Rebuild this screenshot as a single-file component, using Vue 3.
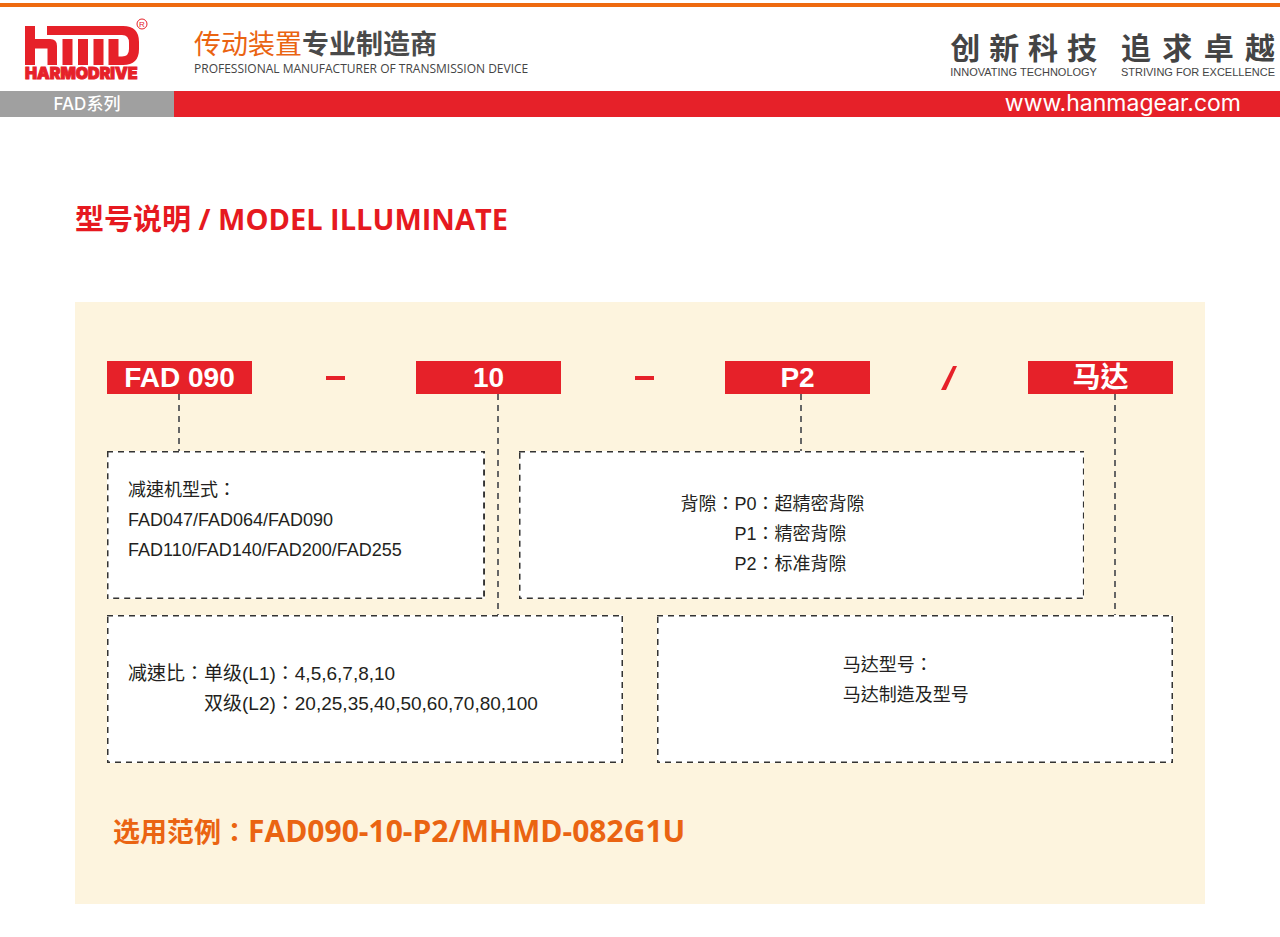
<template>
  <div class="page">
    <header class="header">
      <div class="brand">
        <svg class="logo" viewBox="0 0 124 64" role="img" aria-label="HARMODRIVE">
          <g fill="#e62129">
            <path d="M1 8H11V21H26Q33 21 33 28V47H23.5V30.5H11V47H1Z" />
            <path d="M38.5 21H48.5V47H38.5ZM54 21H64V47H54ZM69.5 21H79.5V47H69.5Z" />
            <path d="M23 8H99Q115 8 115 24V31Q115 47 99 47H84.5V21H94.5V38.5H98Q105 38.5 105 31V25Q105 17 98 17H23Z" />
          </g>
          <text class="logo-word" x="1" y="61">HARMODRIVE</text>
          <circle cx="118" cy="6" r="5" fill="none" stroke="#e62129" />
          <text class="logo-mark" x="118" y="9">R</text>
        </svg>
        <div class="tagline">
          <p class="tagline-cn"><span>传动装置</span><strong>专业制造商</strong></p>
          <p class="tagline-en">PROFESSIONAL MANUFACTURER OF TRANSMISSION DEVICE</p>
        </div>
      </div>
      <div class="slogans">
        <div v-for="slogan in slogans" :key="slogan.en" class="slogan">
          <p class="slogan-cn"><span v-for="letra in slogan.cn" :key="letra">{{ letra }}</span></p>
          <p class="slogan-en">{{ slogan.en }}</p>
        </div>
      </div>
    </header>

    <div class="bar">
      <span class="bar-series">FAD系列</span>
      <a class="bar-link" href="http://www.hanmagear.com">www.hanmagear.com</a>
    </div>

    <main class="content">
      <h1 class="title">型号说明 / MODEL ILLUMINATE</h1>

      <section class="panel">
        <div class="codes">
          <div class="code code-model">FAD 090</div>
          <i class="dash"></i>
          <div class="code code-ratio">10</div>
          <i class="dash"></i>
          <div class="code code-backlash">P2</div>
          <svg class="slash" viewBox="0 0 16 24"><path d="M12 0H16L5 24H0Z" /></svg>
          <div class="code code-motor">马达</div>
        </div>

        <div class="row row-top">
          <div class="box box-model">
            <svg class="edge"><rect width="100%" height="100%" /></svg>
            <p>减速机型式：</p>
            <p>FAD047/FAD064/FAD090</p>
            <p>FAD110/FAD140/FAD200/FAD255</p>
          </div>
          <div class="box box-backlash">
            <svg class="edge"><rect width="100%" height="100%" /></svg>
            <dl class="pairs">
              <dt>背隙：</dt>
              <dd v-for="item in backlash" :key="item">{{ item }}</dd>
            </dl>
          </div>
        </div>

        <div class="row row-bottom">
          <div class="box box-ratio">
            <svg class="edge"><rect width="100%" height="100%" /></svg>
            <dl class="pairs">
              <dt>减速比：</dt>
              <dd v-for="item in ratios" :key="item">{{ item }}</dd>
            </dl>
          </div>
          <div class="box box-motor">
            <svg class="edge"><rect width="100%" height="100%" /></svg>
            <p>马达型号：</p>
            <p>马达制造及型号</p>
          </div>
        </div>

        <p class="sample">选用范例：<span>FAD090-10-P2/MHMD-082G1U</span></p>
      </section>
    </main>
  </div>
</template>

<script setup>
const slogans = [
  { cn: '创新科技', en: 'INNOVATING TECHNOLOGY' },
  { cn: '追求卓越', en: 'STRIVING FOR EXCELLENCE' }
];

const backlash = ['P0：超精密背隙', 'P1：精密背隙', 'P2：标准背隙'];

const ratios = ['单级(L1)：4,5,6,7,8,10', '双级(L2)：20,25,35,40,50,60,70,80,100'];
</script>

<style>
body {
    margin: 0;
    background: #fff;
}
</style>

<style scoped>
.page {
    font-family: "Liberation Sans", "Noto Sans CJK TC", sans-serif;
    color: #231f20;
}

p, dl, dd, h1 { margin: 0; }

.header {
    display: flex;
    justify-content: space-between;
    margin-top: 3px;
    border-top: 4px solid #ee6a10;
    padding: 11px 5px 0 24px;
    height: 73px;
}

.brand {
    display: flex;
    gap: 46px;
}

.logo {
    width: 124px;
    height: 64px;
}

.logo-word {
    font-family: Inter, "Liberation Sans", sans-serif;
    font-size: 16px;
    font-weight: 900;
    fill: #e62129;
    stroke: #e62129;
    stroke-width: 1;
}

.logo-mark {
    font-size: 8px;
    text-anchor: middle;
    fill: #e62129;
}

.tagline {
    padding-top: 8px;
    white-space: nowrap;
}

.tagline-cn {
    font-family: "Noto Sans CJK SC", sans-serif;
    font-size: 27px;
    line-height: 34px;
    color: #4a4a4a;
}

.tagline-cn span {
    font-weight: 400;
    color: #ea6412;
}

.tagline-en {
    font-family: "Open Sans", sans-serif;
    font-size: 12px;
    line-height: 18px;
    color: #444;
}

.slogans {
    display: flex;
    gap: 24px;
    padding-top: 12px;
    color: #444;
    white-space: nowrap;
}

.slogan-cn {
    display: flex;
    justify-content: space-between;
    font-family: "Noto Sans CJK SC", sans-serif;
    font-size: 30px;
    font-weight: 700;
    line-height: 32px;
}

.slogan-en {
    padding-top: 2px;
    font-size: 11px;
    line-height: 16px;
}

.bar {
    display: flex;
    height: 26px;
    line-height: 26px;
    color: #fff;
}

.bar-series {
    width: 174px;
    background: #a0a0a0;
    font-family: Inter, "Noto Sans CJK SC", sans-serif;
    font-size: 17px;
    font-weight: 500;
    text-align: center;
}

.bar-link {
    flex: 1;
    padding-right: 39px;
    background: #e62129;
    font-family: Inter, "Liberation Sans", sans-serif;
    font-size: 23px;
    line-height: 24px;
    color: #fff;
    text-align: right;
    text-decoration: none;
}

.content {
    padding: 80px 75px 33px;
}

.title {
    font-family: "Open Sans", "Noto Sans CJK SC", sans-serif;
    font-size: 29px;
    font-weight: 700;
    line-height: 44px;
    color: #e61920;
}

.panel {
    margin-top: 61px;
    padding: 59px 32px 48px;
    background: #fdf4de;
}

.codes {
    display: flex;
    align-items: center;
    justify-content: space-between;
    margin-bottom: 57px;
}

.code {
    position: relative;
    width: 145px;
    background: #e62129;
    font-size: 28px;
    font-weight: 700;
    line-height: 33px;
    color: #fff;
    text-align: center;
}

/* Líneas que unen cada código con su caja */
.code::after {
    content: "";
    position: absolute;
    top: 100%;
    left: 49%;
    width: 2px;
    height: 57px;
    background: repeating-linear-gradient(#666 0 6px, transparent 6px 11px);
}

.code-ratio::after { left: 56%; height: 221px; }
.code-backlash::after { left: 52%; }
.code-motor::after { left: 59%; height: 221px; }

.dash {
    width: 19px;
    height: 4px;
    margin-left: 3px;
    background: #e62129;
}

.slash {
    width: 16px;
    height: 24px;
    fill: #e62129;
}

.row {
    display: grid;
    gap: 34px;
    font-size: 18px;
    line-height: 30px;
}

.row-top {
    grid-template-columns: 378fr 566fr;
    margin-right: 89px;
}

.row-bottom {
    grid-template-columns: 1fr 1fr;
    margin-top: 16px;
}

.box {
    position: relative;
    min-height: 148px;
    box-sizing: border-box;
    background: #fff;
}

.edge {
    position: absolute;
    inset: 0;
    width: 100%;
    height: 100%;
}

.edge rect {
    fill: none;
    stroke: #333;
    stroke-width: 3;
    stroke-dasharray: 6 5;
}

.box-model { padding: 24px 21px; }
.box-backlash { padding: 38px 20px 20px 162px; }
.box-ratio {
    padding: 44px 20px 20px 21px;
    font-size: 19px;
}
.box-motor { padding: 35px 20px 20px 36%; }

.pairs {
    display: grid;
    grid-template-columns: max-content 1fr;
}

.pairs dd { grid-column: 2; }

.sample {
    margin-top: 44px;
    padding-left: 6px;
    font-family: "Open Sans", "Noto Sans CJK TC", sans-serif;
    font-size: 27px;
    font-weight: 700;
    line-height: 48px;
    color: #ea6412;
}

.sample span { font-size: 30px; }
</style>
